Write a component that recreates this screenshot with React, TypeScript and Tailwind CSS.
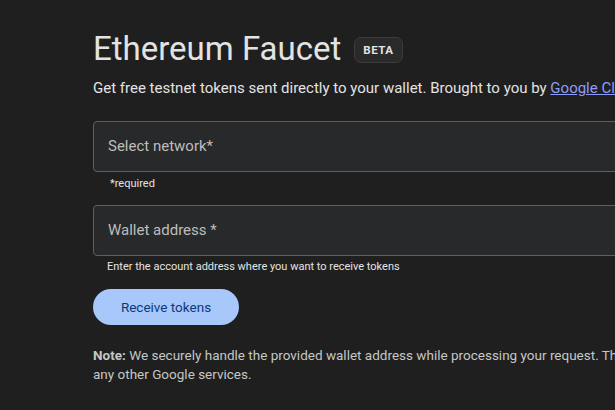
export default function App() {
  return (
    <div className="w-[615px] h-[410px] overflow-hidden bg-[#1f1f1f] text-[#e3e3e3]" style={{ fontFamily: "Roboto, 'Noto Sans', sans-serif" }}>
      <div className="w-[760px] pl-[93px] pt-[29px]">
        <div className="flex items-center gap-[13px]">
          <h1 className="text-[33px] leading-[40px] font-normal text-[#e3e3e3]">Ethereum Faucet</h1>
          <span className="mt-[2px] rounded-[7px] border border-[#3c3c3c] bg-[#2a2a2a] px-[8px] py-[5px] text-[11.5px] font-bold leading-[14px] tracking-[0.5px] text-[#e3e3e3]">
            BETA
          </span>
        </div>
        <p className="mt-[9px] whitespace-nowrap text-[15px] leading-[20px] text-[#e3e3e3]">
          Get free testnet tokens sent directly to your wallet. Brought to you by{" "}
          <a href="#" className="text-[#8e9cf9] underline">Google Cloud</a>.
        </p>

        <div className="mt-[23px] flex h-[51px] items-center rounded-[4px] border border-[#5e5e5e] bg-[#28292a] px-[14px]">
          <span className="text-[15px] text-[#bdbdbd]">Select network*</span>
        </div>
        <div className="mt-[4px] pl-[17px] text-[11px] leading-[16px] text-[#e3e3e3]">*required</div>

        <div className="mt-[13px] flex h-[51px] items-center rounded-[4px] border border-[#5e5e5e] bg-[#28292a] px-[14px]">
          <span className="text-[15px] text-[#bdbdbd]">Wallet address *</span>
        </div>
        <div className="mt-[3px] pl-[14px] text-[11px] leading-[16px] text-[#e3e3e3]">
          Enter the account address where you want to receive tokens
        </div>

        <button
          type="button"
          className="mt-[14px] h-[36px] w-[146px] rounded-full bg-[#a8c7fa] text-[13.5px] font-normal text-[#0b3a7a]"
        >
          Receive tokens
        </button>

        <p className="mt-[21px] whitespace-nowrap text-[13.5px] leading-[19px] text-[#c4c7c5]">
          <span className="font-bold">Note:</span> We securely handle the provided wallet address while processing your request. This address is not used in
          <br />
          any other Google services.
        </p>
      </div>
    </div>
  );
}
